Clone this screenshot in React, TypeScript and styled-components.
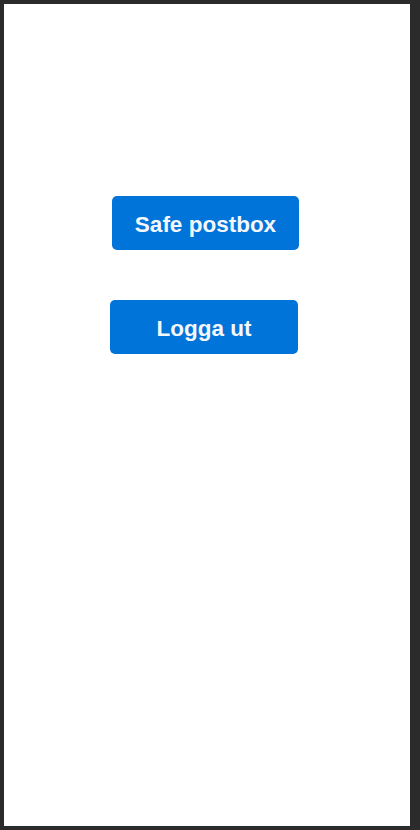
import styled, { createGlobalStyle } from "styled-components";

const GlobalStyle = createGlobalStyle`
  html, body {
    margin: 0;
    padding: 0;
    background: #2b2b2b;
  }
  body {
    font-family: "Liberation Sans", Arial, sans-serif;
  }
`;

const Screen = styled.div`
  box-sizing: border-box;
  margin: 4px 10px 4px 4px;
  height: 822px;
  background: #ffffff;
  display: flex;
  flex-direction: column;
  align-items: flex-start;
  padding-top: 192px;
  gap: 50px;
`;

const ActionButton = styled.button<{ $offset: number; $width: number }>`
  margin-left: ${({ $offset }) => $offset}px;
  width: ${({ $width }) => $width}px;
  height: 54px;
  padding: 3px 0 0;
  border: none;
  border-radius: 5px;
  background: #0074d9;
  color: #f4f7fb;
  font-family: "Liberation Sans", Arial, sans-serif;
  font-size: 22.5px;
  font-weight: 700;
  cursor: pointer;
`;

const App = () => {
  return (
    <>
      <GlobalStyle />
      <Screen>
        <ActionButton $offset={108} $width={187}>
          Safe postbox
        </ActionButton>
        <ActionButton $offset={106} $width={188}>
          Logga ut
        </ActionButton>
      </Screen>
    </>
  );
};

export default App;
